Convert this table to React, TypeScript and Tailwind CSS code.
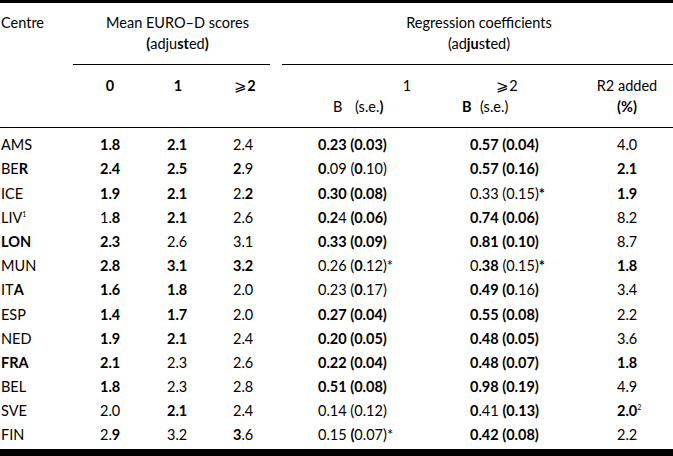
import { FC, ReactNode } from 'react';

// cell text: {..} marks bold runs, ^x marks a superscript character
const rich = (s: string): ReactNode[] =>
  s.split(/(\{[^}]*\}|\^.)/).filter(Boolean).map((part, i) => {
    if (part.startsWith('{')) return <b key={i} className="font-bold">{part.slice(1, -1)}</b>;
    if (part.startsWith('^')) return <sup key={i} className="text-[7px] -top-[6px]">{part.slice(1)}</sup>;
    return <span key={i}>{part}</span>;
  });

type Row = [string, string, string, string, string, string, string];

const rows: Row[] = [
  ['AMS', '{1.8}', '{2.1}', '2.4', '{0.23 (0.03)}', '{0.57 (0.04)}', '4.0'],
  ['BE{R}', '{2.4}', '{2.5}', '{2}.9', '{0}.09 ({0}.10)', '{0.57 (0.16)}', '{2.1}'],
  ['ICE', '{1.9}', '{2.1}', '2.{2}', '{0.30 (0.08)}', '0.33 (0.15){*}', '{1.9}'],
  ['LIV^1', '1.{8}', '{2.1}', '2.6', '{0.2}4 {(0.06)}', '{0.74 (0.06)}', '8.2'],
  ['{LON}', '{2.3}', '2.6', '3.1', '{0.33 (0.09)}', '{0.81 (0.10)}', '8.7'],
  ['MUN', '{2.8}', '{3.1}', '{3.2}', '0.26 ({0}.12)*', '0{.38} (0.15){*}', '{1.8}'],
  ['IT{A}', '{1.6}', '{1.8}', '2.0', '0.23 ({0}.17)', '{0.49 (0}.16{)}', '3.4'],
  ['ESP', '{1.4}', '{1.7}', '2.0', '{0.27 (0.04)}', '{0.55 (0.08)}', '2.2'],
  ['NED', '{1.9}', '{2.1}', '2.4', '{0.20 (0.05)}', '{0.48 (0.05)}', '3.6'],
  ['{FRA}', '{2.1}', '2.3', '2.6', '{0.22 (0.04)}', '{0.48 (0.07)}', '{1.8}'],
  ['BEL', '{1.8}', '2.3', '2.8', '{0.51 (0.08)}', '{0.98 (0.19)}', '4.9'],
  ['SVE', '2.0', '{2.1}', '2.4', '0.14 (0.12)', '{0}.41 {(0.13)}', '{2.0}^2'],
  ['FIN', '2.{9}', '3.2', '{3}.6', '0.15 {(}0.07)*', '{0.42 (0.08)}', '2.2'],
];

const App: FC = () => {
  return (
    <div
      className="w-[673px] h-[456px] bg-white text-black text-[14.5px] overflow-hidden"
      style={{ fontFamily: 'Lato, "Open Sans", sans-serif' }}
    >
      <div className="h-[3px] bg-black"></div>

      {/* header */}
      <div className="flex leading-[21px]">
        <div className="w-[73px] pl-px pt-[9px]">Centre</div>

        <div className="w-[197px] pt-[9px]">
          <div className="text-center pl-[12px]">Mean EURO–D scores</div>
          <div className="text-center pl-[12px]">{rich('{(}adju{st}ed{)}')}</div>
          <div className="h-px bg-black mt-[10px]"></div>
          <div className="flex mt-[10px]">
            <div className="w-[74px] text-center font-bold">0</div>
            <div className="w-[62px] text-center font-bold">1</div>
            <div className="ml-[11px] w-[50px] text-center">
              ⩾<b className="font-bold">2</b>
            </div>
          </div>
          <div className="h-[21px]"></div>
        </div>

        <div className="flex-1 ml-[12px] pt-[9px]">
          <div className="text-center pl-[3px]">Regression coefficients</div>
          <div className="text-center pl-[3px]">{rich('(ad{ju}s{t}ed)')}</div>
          <div className="h-px bg-black mt-[10px]"></div>
          <div className="flex mt-[10px]">
            <div className="ml-[70px] w-[110px] text-center">1</div>
            <div className="w-[90px] text-center">⩾2</div>
            <div className="ml-[29px] w-[92px] text-center">R2 added</div>
          </div>
          <div className="flex">
            <div className="ml-[51px] w-[22px]">B</div>
            <div className="w-[107px]">{rich('(s.e.{)}')}</div>
            <div className="w-[18px] font-bold">B</div>
            <div className="w-[101px]">(s.e.)</div>
            <div className="w-[92px] text-center font-bold">(%)</div>
          </div>
        </div>
      </div>

      <div className="h-px bg-black mt-[10px]"></div>

      {/* body */}
      <div className="pt-[5px] pl-px">
        {rows.map((r) => (
          <div
            key={r[0]}
            className="grid grid-cols-[99px_67px_66px_85px_152px_147px_56px] h-[24.2px] items-center whitespace-nowrap"
          >
            {r.map((c, i) => (
              <div key={i}>{rich(c)}</div>
            ))}
          </div>
        ))}
      </div>

      <div className="h-[7px] bg-black mt-[2px]"></div>
    </div>
  );
};

export default App;
